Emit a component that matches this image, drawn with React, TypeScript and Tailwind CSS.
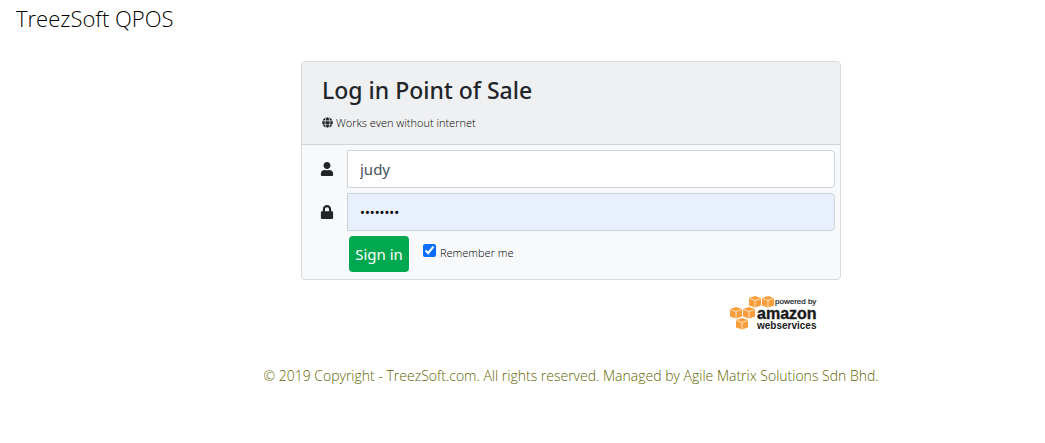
import { useState } from "react";
import { FaGlobe, FaLock, FaUser } from "react-icons/fa";

const cubes = [
  { x: 19, y: 0 },
  { x: 32, y: 0 },
  { x: 0, y: 11 },
  { x: 13, y: 11 },
  { x: 6, y: 22 },
];

function AwsLogo() {
  return (
    <svg
      width="90"
      height="36"
      viewBox="0 0 90 36"
      role="img"
      aria-label="Powered by Amazon Web Services"
      fontFamily="Liberation Sans, sans-serif"
      fill="#1a1a1a"
    >
      {cubes.map(({ x, y }) => (
        <g key={`${x}-${y}`} transform={`translate(${x} ${y})`}>
          <path d="M0 2 L6 0 L12 2 V9.5 L6 11.5 L0 9.5 Z" fill="#fb9d3a" />
          <path d="M0.5 2.5 L6 4.5 L11.5 2.5 M6 4.5 V11" fill="none" stroke="#ffe3c2" strokeWidth="1" />
        </g>
      ))}
      <text x="45" y="8" fontSize="8" stroke="#1a1a1a" strokeWidth="0.2">powered by</text>
      <text x="27" y="23" fontSize="16" fontWeight="700" stroke="#1a1a1a" strokeWidth="0.4">amazon</text>
      <text x="27" y="33" fontSize="10" fontWeight="700">webservices</text>
    </svg>
  );
}

export default function App() {
  const [user, setUser] = useState("judy");
  const [password, setPassword] = useState("password");
  const [remember, setRemember] = useState(true);

  return (
    <div className="bg-white font-['Noto_Sans',sans-serif] text-[#212529]">
      <header className="px-4 pt-1">
        <h1 className="font-['Open_Sans',sans-serif] text-[22px] leading-7 font-light text-black">TreezSoft QPOS</h1>
      </header>

      <main className="pt-[29px] pl-[97px]">
        <div className="mx-auto w-full max-w-[540px]">
          <form
            className="overflow-hidden rounded border border-[#d9dbdd] bg-[#f8f9fb]"
            onSubmit={(e) => e.preventDefault()}
          >
            <div className="border-b border-[#d0d3d6] bg-[#eff0f2] px-5 pt-3 pb-3">
              <h2 className="text-[23px] leading-8 font-medium">Log in Point of Sale</h2>
              <p className="mt-2 flex items-center gap-[3px] pb-[1px] font-['Open_Sans',sans-serif] text-[11px] leading-[17px] font-light text-black">
                <FaGlobe size={11} className="text-[#212529]" />
                Works even without internet
              </p>
            </div>

            <div className="flex flex-col gap-[5px] p-[5px]">
              {/* Usuario */}
              <div className="flex items-center">
                <label htmlFor="user" className="flex w-10 justify-center" aria-label="User">
                  <FaUser size={14} />
                </label>
                <input
                  id="user"
                  type="text"
                  value={user}
                  onChange={(e) => setUser(e.target.value)}
                  className="h-[38px] min-w-0 flex-1 rounded-r border border-[#ced4da] bg-white px-3 text-[15px] text-[#495057]"
                />
              </div>

              {/* Contraseña */}
              <div className="flex items-center">
                <label htmlFor="password" className="flex w-10 justify-center" aria-label="Password">
                  <FaLock size={14} />
                </label>
                <input
                  id="password"
                  type="password"
                  value={password}
                  onChange={(e) => setPassword(e.target.value)}
                  className="h-[38px] min-w-0 flex-1 rounded-r border border-[#ced4da] bg-[#e8f0fe] px-3 text-[13px] text-black"
                />
              </div>

              <div className="flex items-start pb-[2px] pl-[42px]">
                <button type="submit" className="h-9 w-[60px] rounded bg-[#00a84f] text-[15px] text-white">
                  Sign in
                </button>
                <label className="mt-2 ml-[14px] flex items-start gap-1 font-['Open_Sans',sans-serif] text-[11px] leading-[18px] font-light text-black">
                  <input
                    type="checkbox"
                    checked={remember}
                    onChange={(e) => setRemember(e.target.checked)}
                    className="size-[13px] accent-[#0d6efd]"
                  />
                  Remember me
                </label>
              </div>
            </div>
          </form>

          <div className="flex justify-end pt-4 pr-[21px]">
            <AwsLogo />
          </div>
        </div>

        <footer className="pt-[34px] text-center font-['Open_Sans',sans-serif] text-[14px] leading-5 font-light text-[#626600]">
          © 2019 Copyright - TreezSoft.com. All rights reserved. Managed by Agile Matrix Solutions Sdn Bhd.
        </footer>
      </main>
    </div>
  );
}
